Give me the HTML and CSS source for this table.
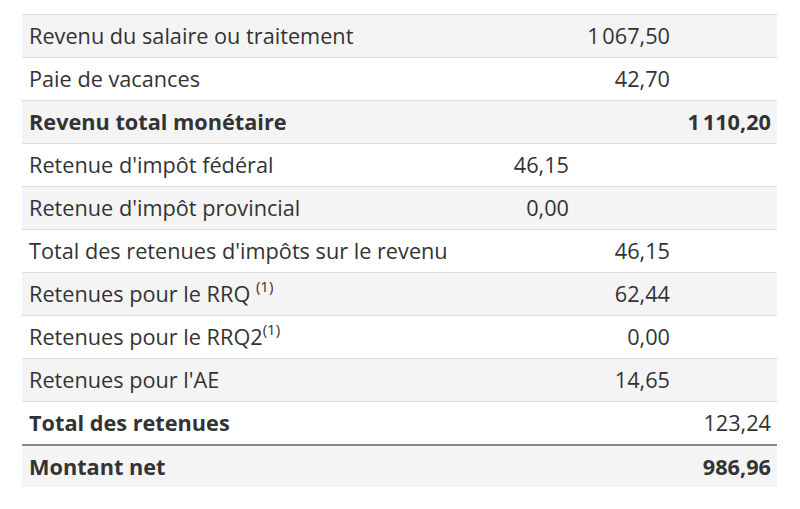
FILE: index.html
```html
<!DOCTYPE html>
<html lang="fr">
<head>
<meta charset="utf-8">
<link rel="stylesheet" href="styles.css">
</head>
<body>
<table class="pay">
  <tbody>
    <tr><td>Revenu du salaire ou traitement</td><td></td><td class="num">1&#8239;067,50</td><td></td></tr>
    <tr><td>Paie de vacances</td><td></td><td class="num">42,70</td><td></td></tr>
    <tr class="strong"><td>Revenu total monétaire</td><td></td><td></td><td class="num">1&#8239;110,20</td></tr>
    <tr><td>Retenue d'impôt fédéral</td><td class="num">46,15</td><td></td><td></td></tr>
    <tr><td>Retenue d'impôt provincial</td><td class="num">0,00</td><td></td><td></td></tr>
    <tr><td>Total des retenues d'impôts sur le revenu</td><td></td><td class="num">46,15</td><td></td></tr>
    <tr><td>Retenues pour le RRQ <sup>(1)</sup></td><td></td><td class="num">62,44</td><td></td></tr>
    <tr><td>Retenues pour le RRQ2<sup>(1)</sup></td><td></td><td class="num">0,00</td><td></td></tr>
    <tr><td>Retenues pour l'AE</td><td></td><td class="num">14,65</td><td></td></tr>
    <tr class="strong"><td>Total des retenues</td><td></td><td></td><td class="num normal">123,24</td></tr>
    <tr class="strong net"><td>Montant net</td><td></td><td></td><td class="num">986,96</td></tr>
  </tbody>
</table>
</body>
</html>
```
FILE: styles.css
```css
html, body {
  margin: 0;
  padding: 0;
  background: #fff;
}
body {
  padding: 14px 23px 0 22px;
  font-family: "Open Sans", "Noto Sans", sans-serif;
  font-size: 21.7px;
  color: #333;
}
.pay {
  width: 755px;
  border-collapse: collapse;
  table-layout: fixed;
}
.pay td {
  height: 42px;
  padding: 0 7px 0 7px;
  border-top: 1px solid #ddd;
  line-height: 28px;
  vertical-align: middle;
  white-space: nowrap;
}
.pay td:nth-child(1) { width: auto; }
.pay td:nth-child(2) { width: 87px; }
.pay td:nth-child(3) { width: 87px; }
.pay td:nth-child(4) { width: 87px; padding-right: 6px; }
.pay tr:nth-child(odd) td { background: #f4f4f4; }
.pay .num { text-align: right; }
.pay .strong td { font-weight: 700; }
.pay .strong td.normal { font-weight: 400; }
.pay .net td { border-top: 2px solid #888; height: 41px; }
.pay sup {
  font-size: 15px;
  line-height: 0;
  vertical-align: 0;
  position: relative;
  top: -10px;
}
```
